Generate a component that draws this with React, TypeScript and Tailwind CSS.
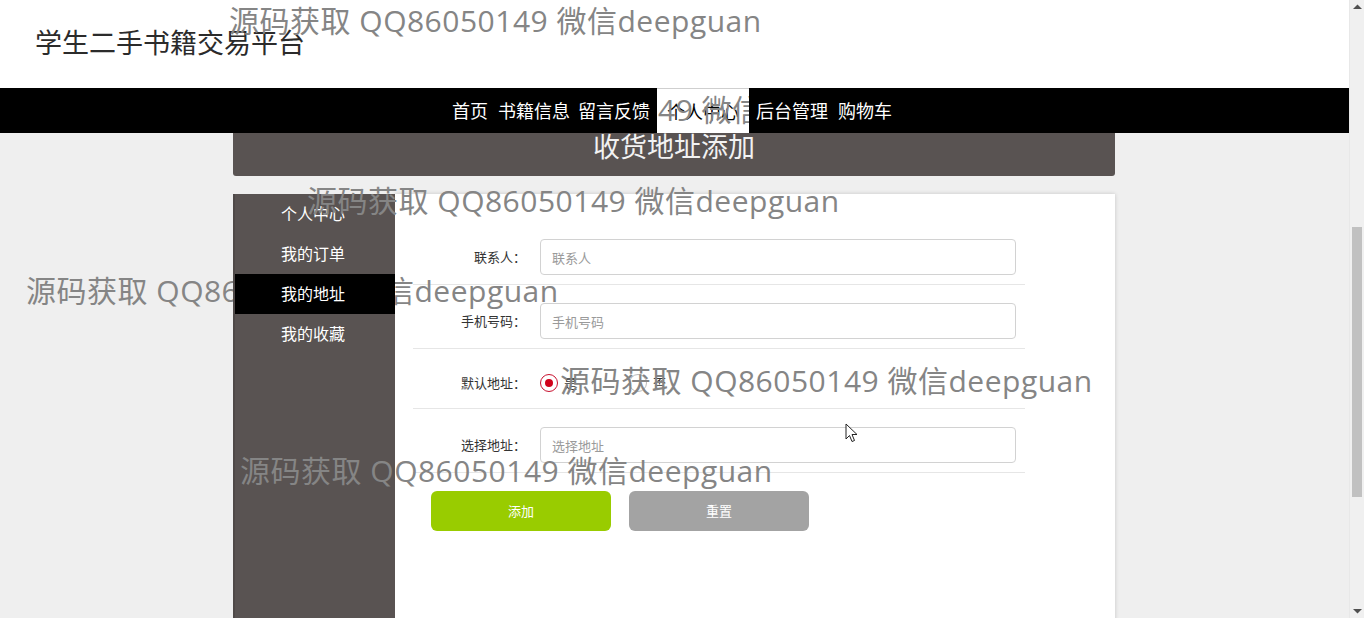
import React from "react";

const navItems = [
  { label: "首页", cls: "text-white" },
  { label: "书籍信息", cls: "ml-[10px] text-white" },
  { label: "留言反馈", cls: "ml-[8px] text-white" },
  { label: "个人中心", cls: "ml-[7px] px-[10px] bg-white text-black border-t border-[#cfcfcf] relative overflow-hidden", active: true },
  { label: "后台管理", cls: "ml-[7px] text-white" },
  { label: "购物车", cls: "ml-[10px] text-white" },
];

const sideItems = [
  { label: "个人中心", active: false },
  { label: "我的订单", active: false },
  { label: "我的地址", active: true },
  { label: "我的收藏", active: false },
];

const MARK = "源码获取 QQ86050149 微信deepguan";
const markFont = { fontFamily: '"Open Sans", "Noto Sans CJK SC", sans-serif' };

function Watermark({ className }: { className: string }) {
  return (
    <div
      className={`absolute whitespace-nowrap text-[30px] leading-[30px] tracking-[0.5px] text-[#858585] pointer-events-none ${className}`}
      style={markFont}
    >
      {MARK}
    </div>
  );
}

function Field({ label, placeholder }: { label: string; placeholder: string }) {
  return (
    <div className="flex items-center pt-[18px] pb-[9px] border-b border-[#e6e6e6]">
      <label className="w-[113px] text-right text-[13px] text-[#333]">{label}：</label>
      <input
        readOnly
        placeholder={placeholder}
        className="ml-[14px] w-[476px] h-[36px] border border-[#d2d2d2] rounded-[4px] px-[11px] text-[13px] bg-white outline-none placeholder:text-[#9a9a9a]"
      />
    </div>
  );
}

export default function App() {
  return (
    <div
      className="flex w-[1364px] h-[618px] overflow-hidden"
      style={{ fontFamily: '"Noto Sans CJK SC", "Noto Sans", sans-serif' }}
    >
      <div className="relative w-[1349px] h-[618px] bg-[#efefef] overflow-hidden">
        <header className="h-[88px] bg-white pl-[35px] pt-[27px]">
          <h1 className="text-[27px] leading-[30px] text-[#2b2b2b]">学生二手书籍交易平台</h1>
        </header>

        <nav className="relative z-10 h-[45px] bg-black flex justify-center pr-[5px]">
          {navItems.map((it) => (
            <div key={it.label} className={`h-[45px] flex items-center text-[18px] ${it.cls}`}>
              {it.label}
              {it.active && (
                <div
                  className="absolute left-[1px] top-[6px] whitespace-nowrap text-[30px] leading-[30px] tracking-[0.5px] text-[#858585]"
                  style={markFont}
                >
                  49 微信deepguan
                </div>
              )}
            </div>
          ))}
        </nav>

        <div className="w-[882px] ml-[233px]">
          <div className="h-[43px] bg-[#595352] rounded-b-[3px] flex justify-center">
            <span className="text-[27px] leading-[30px] text-[#f2f2f2] mt-[-2px]">收货地址添加</span>
          </div>

          <div className="mt-[18px] flex h-[460px]">
            <aside className="relative z-10 w-[162px] bg-[#595352] border-l-[2px] border-[#4f4948]">
              {sideItems.map((s) => (
                <div
                  key={s.label}
                  className={`h-[40px] flex items-center pl-[46px] pb-[2px] text-[16px] text-white ${s.active ? "bg-black" : ""}`}
                >
                  {s.label}
                </div>
              ))}
            </aside>

            <section className="flex-1 bg-white shadow-[0_0_4px_rgba(0,0,0,0.18)]">
              <form className="ml-[18px] w-[612px] pt-[27px]">
                <Field label="联系人" placeholder="联系人" />
                <Field label="手机号码" placeholder="手机号码" />
                <div className="flex items-center pt-[18px] pb-[9px] border-b border-[#e6e6e6]">
                  <label className="w-[113px] text-right text-[13px] text-[#333]">默认地址：</label>
                  <div className="ml-[14px] h-[32px] flex items-center text-[13px] text-[#333]">
                    <span className="w-[18px] h-[18px] rounded-full border border-[#c8102e] flex items-center justify-center">
                      <span className="w-[8px] h-[8px] rounded-full bg-[#d0021b]" />
                    </span>
                    <span className="ml-[6px]">是</span>
                    <span className="ml-[52px] w-[18px] h-[18px] rounded-full border border-[#bbb]" />
                    <span className="ml-[6px]">否</span>
                  </div>
                </div>
                <Field label="选择地址" placeholder="选择地址" />
                <div className="flex pt-[18px] pl-[18px] gap-[18px]">
                  <button type="button" className="w-[180px] h-[40px] rounded-[6px] bg-[#99cc00] text-white text-[13px]">
                    添加
                  </button>
                  <button type="button" className="w-[180px] h-[40px] rounded-[6px] bg-[#a3a3a3] text-white text-[13px]">
                    重置
                  </button>
                </div>
              </form>
            </section>
          </div>
        </div>

        <Watermark className="z-20 left-[229px] top-[6px]" />
        <Watermark className="z-20 left-[307px] top-[186px]" />
        <Watermark className="z-0 left-[26px] top-[276px]" />
        <Watermark className="z-20 left-[560px] top-[366px]" />
        <Watermark className="z-20 left-[240px] top-[456px]" />

        <svg className="absolute z-30 left-[845px] top-[423px]" width="13" height="20" viewBox="0 0 13 20">
          <path d="M1 1 L1 16 L4.5 12.5 L7 18.5 L9.5 17.5 L7 11.5 L12 11.5 Z" fill="#fff" stroke="#222" strokeWidth="1" />
        </svg>
      </div>

      <div className="w-[15px] h-[618px] bg-[#f0f0f0] border-l border-[#e8e8e8] flex flex-col items-center">
        <svg className="mt-[4px]" width="9" height="6" viewBox="0 0 9 6">
          <path d="M0 5 L4.5 0.5 L9 5 Z" fill="#505050" />
        </svg>
        <div className="mt-[217px] w-[10px] h-[270px] bg-[#c1c1c1]" />
        <div className="flex-1" />
        <svg className="mb-[4px]" width="9" height="6" viewBox="0 0 9 6">
          <path d="M0 1 L4.5 5.5 L9 1 Z" fill="#505050" />
        </svg>
      </div>
    </div>
  );
}
